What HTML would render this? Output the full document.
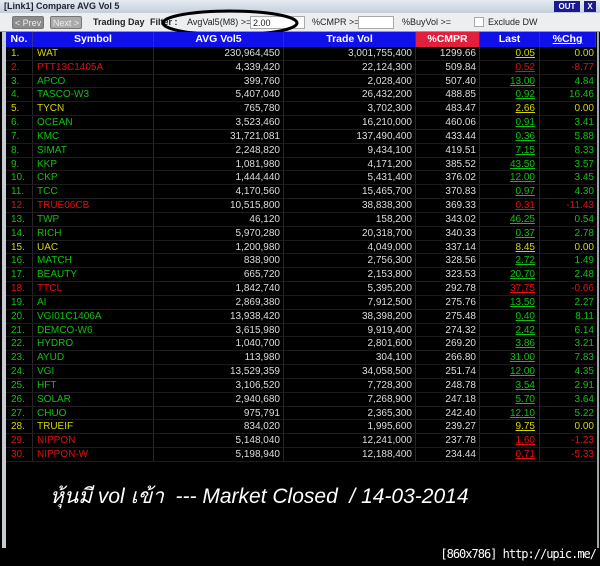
<!DOCTYPE html>
<html><head><meta charset="utf-8"><style>
*{margin:0;padding:0;box-sizing:border-box}
body{width:600px;height:566px;background:#000;position:relative;overflow:hidden;font-family:"Liberation Sans",sans-serif}
.title{position:absolute;left:0;top:0;width:600px;height:13px;background:linear-gradient(#e6ebf1,#c4cfdc);font-size:9px;font-weight:bold;color:#223;padding:1px 4px;line-height:11px}
.out{position:absolute;top:1px;width:26px;height:11px;background:#1a1a90;color:#fff;font-size:8px;font-weight:bold;text-align:center;line-height:11px}
.tb{position:absolute;left:0;top:13px;width:600px;height:19px;background:#eceef0;border-bottom:1px solid #999;font-size:9px;color:#222}
.tb div{position:absolute;top:3px;height:13px;line-height:13px}
.btn{background:#8c8c8c;color:#eee;border:1px solid #777;text-align:center;border-radius:2px}
.inp{background:#fff;border:1px solid #aaa}
.wrap{position:absolute;left:2px;top:32px;width:597px;height:516px;border-left:4px solid #c8ccd2;border-right:2px solid #9aa}
.hdr{position:absolute;left:6px;top:32px;width:590px;height:15px;background:#1010e8;color:#fff;font-weight:bold;font-size:10.5px}
.row{position:absolute;left:6px;width:590px;height:13.8px;font-size:10px;line-height:13.8px;border-bottom:1px solid #1c1c1c}
.c{position:absolute;top:0;height:100%;border-right:1px solid #262626;white-space:nowrap}
.n{left:0;width:27px;padding-left:5px}.s{left:27px;width:121px;padding-left:4px}
.a{left:148px;width:130px;text-align:right;padding-right:3px;color:#ddd}
.t{left:278px;width:132px;text-align:right;padding-right:3px;color:#ddd}
.p{left:410px;width:64px;text-align:right;padding-right:3px;color:#ddd}
.l{left:474px;width:60px;text-align:right;padding-right:4px;text-decoration:underline}
.g{left:534px;width:56px;text-align:right;padding-right:2px;border-right:none}
.hdr .c{text-align:center;padding:0;line-height:15px;color:#fff;border-right:1px solid #3030a0}
.Y{color:#d6d600}.R{color:#e01010}.G{color:#10c010}
.cap{position:absolute;left:50px;top:480px;color:#fff;font-size:21px;font-style:italic;font-family:"Liberation Sans","Noto Sans CJK SC",sans-serif}
.foot{position:absolute;right:4px;top:547px;color:#fff;font-size:12px;font-family:"DejaVu Sans Mono",monospace;letter-spacing:-1px}
</style></head><body>
<div class="title">[Link1] Compare AVG Vol 5</div>
<div class="out" style="left:554px">OUT</div><div class="out" style="left:584px;width:12px">X</div>
<div class="tb">
<div class="btn" style="left:12px;width:32px">&lt; Prev</div>
<div class="btn" style="left:50px;width:32px;background:#aaa">Next &gt;</div>
<div style="left:93px;font-weight:bold">Trading Day</div>
<div style="left:150px;font-weight:bold">Filter :</div>
<div style="left:187px">AvgVal5(M8) &gt;=</div>
<div class="inp" style="left:250px;width:55px;padding-left:2px">2.00</div>
<div style="left:312px">%CMPR &gt;=</div>
<div class="inp" style="left:358px;width:36px"></div>
<div style="left:402px">%BuyVol &gt;=</div>
<div class="inp" style="left:474px;top:4px;width:10px;height:10px"></div>
<div style="left:488px">Exclude DW</div>
</div>
<svg style="position:absolute;left:160px;top:8px" width="140" height="30"><ellipse cx="70" cy="15" rx="67" ry="12" fill="none" stroke="#000" stroke-width="3"/></svg>
<div class="wrap"></div>
<div class="hdr"><div class="c n" style="padding:0">No.</div><div class="c s" style="padding:0">Symbol</div><div class="c a" style="padding:0">AVG Vol5</div><div class="c t" style="padding:0">Trade Vol</div><div class="c p" style="padding:0;background:#e0203c">%CMPR</div><div class="c l" style="padding:0;text-decoration:none">Last</div><div class="c g" style="padding:0;text-decoration:underline">%Chg</div></div>
<div id="rows"></div>
<div class="cap">หุ้นมี vol เข้า &nbsp;--- Market Closed &nbsp;/ 14-03-2014</div>
<div class="foot">[860x786] http://upic.me/</div>
<script>
const d=[["Y","WAT","230,964,450","3,001,755,400","1299.66","0.05","0.00"],["R","PTT13C1405A","4,339,420","22,124,300","509.84","0.52","-8.77"],["G","APCO","399,760","2,028,400","507.40","13.00","4.84"],["G","TASCO-W3","5,407,040","26,432,200","488.85","0.92","16.46"],["Y","TYCN","765,780","3,702,300","483.47","2.66","0.00"],["G","OCEAN","3,523,460","16,210,000","460.06","0.91","3.41"],["G","KMC","31,721,081","137,490,400","433.44","0.36","5.88"],["G","SIMAT","2,248,820","9,434,100","419.51","7.15","8.33"],["G","KKP","1,081,980","4,171,200","385.52","43.50","3.57"],["G","CKP","1,444,440","5,431,400","376.02","12.00","3.45"],["G","TCC","4,170,560","15,465,700","370.83","0.97","4.30"],["R","TRUE06CB","10,515,800","38,838,300","369.33","0.31","-11.43"],["G","TWP","46,120","158,200","343.02","46.25","0.54"],["G","RICH","5,970,280","20,318,700","340.33","0.37","2.78"],["Y","UAC","1,200,980","4,049,000","337.14","8.45","0.00"],["G","MATCH","838,900","2,756,300","328.56","2.72","1.49"],["G","BEAUTY","665,720","2,153,800","323.53","20.70","2.48"],["R","TTCL","1,842,740","5,395,200","292.78","37.75","-0.66"],["G","AI","2,869,380","7,912,500","275.76","13.50","2.27"],["G","VGI01C1406A","13,938,420","38,398,200","275.48","0.40","8.11"],["G","DEMCO-W6","3,615,980","9,919,400","274.32","2.42","6.14"],["G","HYDRO","1,040,700","2,801,600","269.20","3.86","3.21"],["G","AYUD","113,980","304,100","266.80","31.00","7.83"],["G","VGI","13,529,359","34,058,500","251.74","12.00","4.35"],["G","HFT","3,106,520","7,728,300","248.78","3.54","2.91"],["G","SOLAR","2,940,680","7,268,900","247.18","5.70","3.64"],["G","CHUO","975,791","2,365,300","242.40","12.10","5.22"],["Y","TRUEIF","834,020","1,995,600","239.27","9.75","0.00"],["R","NIPPON","5,148,040","12,241,000","237.78","1.60","-1.23"],["R","NIPPON-W","5,198,940","12,188,400","234.44","0.71","-5.33"]];
let h="";d.forEach((r,i)=>{h+=`<div class="row" style="top:${47+i*13.83}px"><div class="c n ${r[0]}">${i+1}.</div><div class="c s ${r[0]}">${r[1]}</div><div class="c a">${r[2]}</div><div class="c t">${r[3]}</div><div class="c p">${r[4]}</div><div class="c l ${r[0]}">${r[5]}</div><div class="c g ${r[0]}">${r[6]}</div></div>`});
document.getElementById("rows").innerHTML=h;
</script>
</body></html>
